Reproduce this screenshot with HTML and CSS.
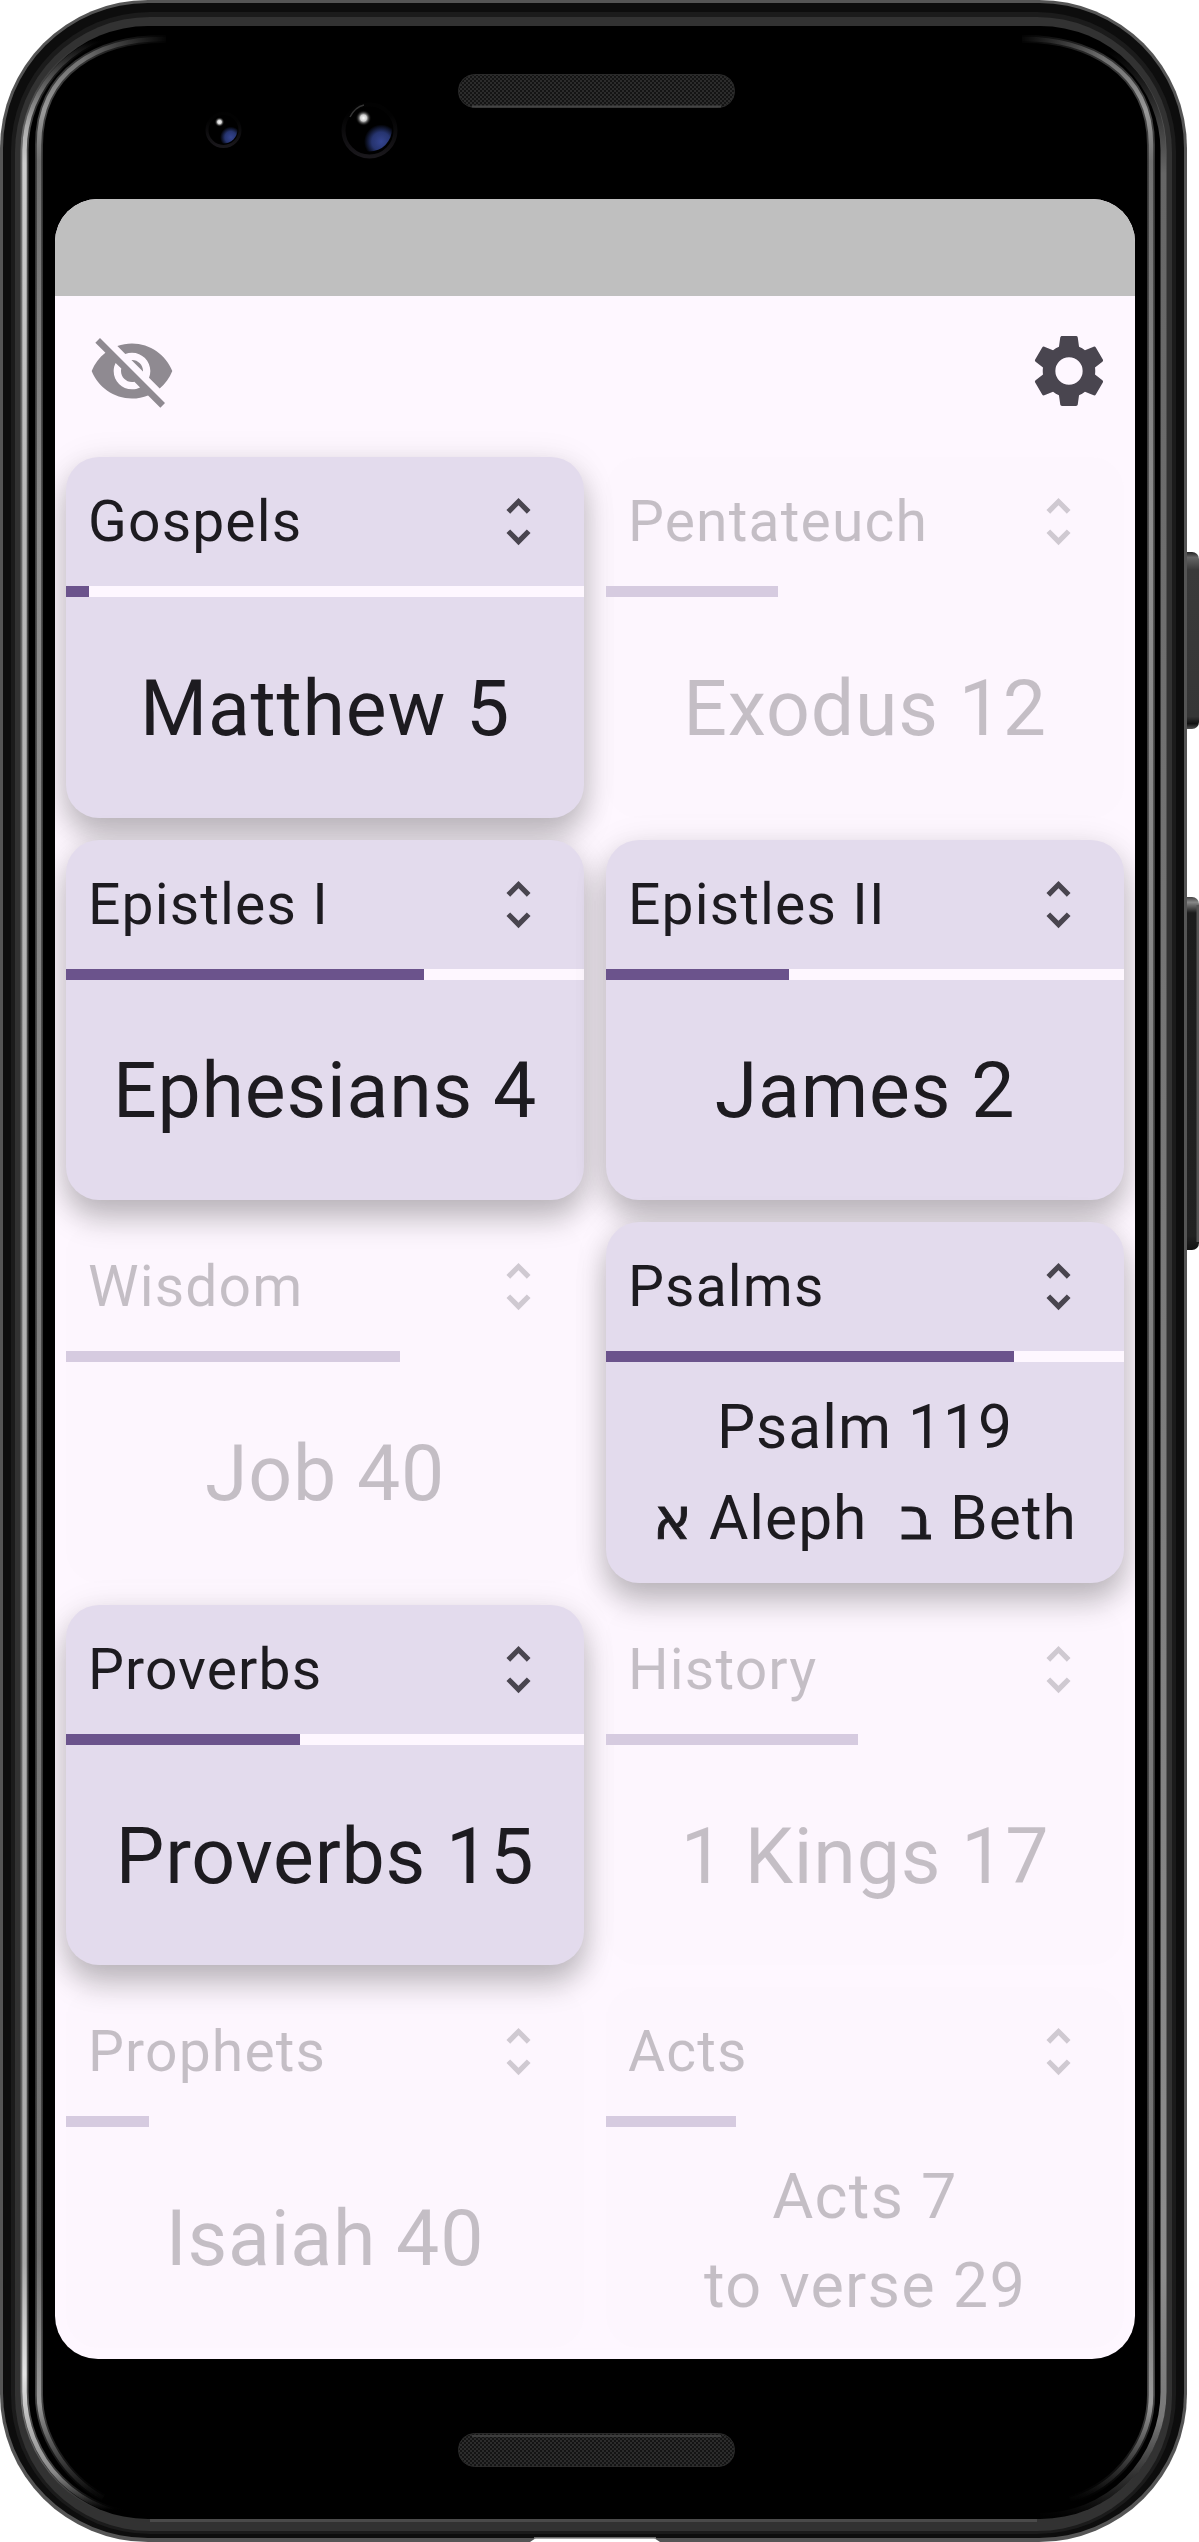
FILE: index.html
```html
<!DOCTYPE html>
<html lang="en">
<head>
<meta charset="utf-8">
<title>Reading Lists</title>
<link rel="stylesheet" href="styles.css">
</head>
<body>
<svg width="0" height="0" class="defs" aria-hidden="true">
  <symbol id="unfold" viewBox="0 0 24 24"><path d="M12 5.830L15.170 9l1.410-1.410L12 3 7.410 7.590 8.830 9 12 5.830zm0 12.340L8.830 15l-1.410 1.410L12 21l4.590-4.590L15.170 15 12 18.170z"/></symbol>
</svg>
<div class="device">
  <svg class="frame" viewBox="0 0 1199 2542" aria-hidden="true">
    <defs>
      <pattern id="mesh" width="4" height="4" patternUnits="userSpaceOnUse"><rect width="4" height="4" fill="#141414"/><rect width="2" height="2" fill="#2c2c2c"/><rect x="2" y="2" width="2" height="2" fill="#2c2c2c"/></pattern>
      <linearGradient id="edge" gradientUnits="userSpaceOnUse" x1="0" y1="40" x2="0" y2="2510">
        <stop offset="0" stop-color="#888" stop-opacity="0"/><stop offset=".035" stop-color="#aaa"/><stop offset=".05" stop-color="#ccc"/><stop offset=".2" stop-color="#b5b5b5"/><stop offset=".9" stop-color="#aaa"/><stop offset=".945" stop-color="#e4e4e4"/><stop offset=".985" stop-color="#888" /><stop offset="1" stop-color="#666" stop-opacity="0"/>
      </linearGradient>
      <linearGradient id="edgeR" gradientUnits="userSpaceOnUse" x1="0" y1="50" x2="0" y2="2520">
        <stop offset="0" stop-color="#666" stop-opacity="0"/><stop offset=".05" stop-color="#666"/><stop offset=".9" stop-color="#8c8c8c"/><stop offset=".96" stop-color="#777"/><stop offset="1" stop-color="#666" stop-opacity="0"/>
      </linearGradient>
      <linearGradient id="inner" gradientUnits="userSpaceOnUse" x1="0" y1="38" x2="0" y2="2502">
        <stop offset="0" stop-color="#666"/><stop offset=".012" stop-color="#777"/><stop offset=".03" stop-color="#999"/><stop offset=".05" stop-color="#707070"/><stop offset=".2" stop-color="#8c8c8c"/><stop offset=".9" stop-color="#707070"/><stop offset=".96" stop-color="#999"/><stop offset="1" stop-color="#555" stop-opacity="0"/>
      </linearGradient>
      <linearGradient id="fade" gradientUnits="userSpaceOnUse" x1="0" y1="0" x2="1187" y2="0">
        <stop offset=".07" stop-color="#fff"/><stop offset=".143" stop-color="#000"/><stop offset=".857" stop-color="#000"/><stop offset=".93" stop-color="#fff"/>
      </linearGradient>
      <mask id="ends" maskUnits="userSpaceOnUse" x="0" y="0" width="1199" height="2542"><rect width="1199" height="2542" fill="url(#fade)"/></mask>
      <radialGradient id="lens" cx=".76" cy=".78" r=".38"><stop offset="0" stop-color="#34448f"/><stop offset=".55" stop-color="#26346f"/><stop offset="1" stop-color="#000"/></radialGradient>
      <radialGradient id="glint"><stop offset="0" stop-color="#fff"/><stop offset=".4" stop-color="#ccc"/><stop offset="1" stop-color="#000" stop-opacity="0"/></radialGradient>
      <linearGradient id="ring" x1="0" y1="0" x2="0" y2="1"><stop offset=".2" stop-color="#020202"/><stop offset="1" stop-color="#1a181c"/></linearGradient>
      <linearGradient id="key" x1="0" y1="0" x2="0" y2="1"><stop offset="0" stop-color="#222"/><stop offset=".03" stop-color="#666"/><stop offset=".1" stop-color="#3a3a3a"/><stop offset=".93" stop-color="#363636"/><stop offset=".97" stop-color="#111"/><stop offset="1" stop-color="#555"/></linearGradient>
      <linearGradient id="keyDark" x1="0" y1="0" x2="0" y2="1"><stop offset="0" stop-color="#444"/><stop offset=".015" stop-color="#888"/><stop offset=".045" stop-color="#1c1c1c"/><stop offset=".96" stop-color="#222"/><stop offset="1" stop-color="#111"/></linearGradient>
    </defs>
    <rect x="1180" y="552" width="19" height="177" rx="7" fill="url(#key)"/>
    <rect x="1180" y="897" width="19" height="353" rx="7" fill="url(#keyDark)"/>
    <rect x="1196.500" y="905" width="2.500" height="337" fill="#555"/>
    <rect width="1187" height="2542" rx="148" fill="#555"/>
    <rect x="3" y="3" width="1181" height="2535" rx="145" fill="#0d0d0d"/>
    <rect x="11" y="12" width="1165" height="2522" rx="139" fill="#1b1b1b"/>
    <rect x="15" y="17" width="1157" height="2514" rx="135" fill="#323232"/>
    <rect x="22" y="26" width="1144" height="2493" rx="126" fill="#000"/>
    <path d="M150 2520.500H1037" stroke="#4a4a4a" stroke-width="3"/>
    <g fill="none" mask="url(#ends)">
      <path d="M148 29.500A123 121 0 0 0 24.500 150V2392A123 124 0 0 0 148 2516" stroke="url(#edge)" stroke-width="8" opacity=".4"/>
      <path d="M148 29.500A123 121 0 0 0 24.500 150V2392A123 124 0 0 0 148 2516" stroke="url(#edge)" stroke-width="4.500"/>
      <path d="M1040 29.500A123 121 0 0 1 1163.500 150V2392A123 124 0 0 1 1040 2516" stroke="url(#edgeR)" stroke-width="6"/>
      <path d="M166 39C100 38 39 70 39 145V2395C39 2435 65 2477 103 2498" stroke="url(#inner)" stroke-width="8" opacity=".45"/>
      <path d="M166 39C100 38 39 70 39 145V2395C39 2435 65 2477 103 2498" stroke="url(#inner)" stroke-width="4.500"/>
      <path d="M1022 39C1087 38 1151 70 1151 145V2395C1151 2440 1120 2485 1070 2500" stroke="url(#inner)" stroke-width="8" opacity=".45"/>
      <path d="M1022 39C1087 38 1151 70 1151 145V2395C1151 2440 1120 2485 1070 2500" stroke="url(#inner)" stroke-width="4.500"/>
    </g>
    <rect x="458.500" y="74.500" width="276" height="33" rx="16" fill="url(#mesh)" stroke="#2a2a2a"/>
    <path d="M472 106.500H721" stroke="#444" stroke-width="2"/>
    <rect x="458.500" y="2433.500" width="276" height="33" rx="16" fill="url(#mesh)" stroke="#2a2a2a"/>
    <path d="M472 2436H721" stroke="#3c3c3c" stroke-width="2"/>
    <circle cx="223.500" cy="130" r="16.500" fill="#000" stroke="url(#ring)" stroke-width="3"/>
    <circle cx="223.500" cy="129.500" r="14" fill="url(#lens)"/>
    <circle cx="219.500" cy="122" r="5" fill="url(#glint)"/>
    <circle cx="369.500" cy="130.500" r="26" fill="#000" stroke="url(#ring)" stroke-width="4"/>
    <circle cx="369.500" cy="129" r="22.500" fill="url(#lens)"/>
    <circle cx="363.500" cy="118" r="8" fill="url(#glint)"/>
    <path d="M350 117Q355 107 364 105" fill="none" stroke="#333" stroke-width="1.500"/>
    <path d="M530 2542L536 2538H654L660 2542Z" fill="#fff"/>
    <path d="M534 2538H656" stroke="#888" stroke-width="1.500"/>
  </svg>

  <main class="screen">
    <div class="status-bar"></div>
    <header class="toolbar">
      <svg class="icon hide" viewBox="0 0 24 24"><path d="M12 7c2.760 0 5 2.240 5 5 0 .65-.13 1.260-.36 1.830l2.920 2.920c1.510-1.260 2.700-2.890 3.430-4.750-1.730-4.390-6-7.500-11-7.500-1.400 0-2.740.25-3.980.7l2.160 2.160C10.740 7.130 11.350 7 12 7zM2 4.270l2.280 2.280.46.46C3.080 8.300 1.780 10.020 1 12c1.730 4.390 6 7.500 11 7.500 1.550 0 3.030-.3 4.380-.84l.42.42L19.730 22 21 20.730 3.270 3 2 4.270zM7.530 9.800l1.550 1.550c-.05.21-.08.43-.08.65 0 1.660 1.340 3 3 3 .22 0 .44-.03.65-.08l1.550 1.550c-.67.33-1.410.53-2.200.53-2.760 0-5-2.240-5-5 0-.79.2-1.530.53-2.200zm4.310-.78l3.150 3.150.02-.16c0-1.660-1.340-3-3-3l-.17.01z"/></svg>
      <svg class="icon settings" viewBox="0 0 24 24"><path d="M19.500 12c0-.34-.03-.66-.07-1l2.110-1.630c.19-.15.24-.42.12-.64l-2-3.460c-.12-.22-.39-.31-.61-.22l-2.490 1c-.52-.39-1.060-.73-1.690-.98l-.37-2.650A.506.506 0 0 0 14 2h-4c-.25 0-.46.18-.5.42l-.37 2.650c-.63.25-1.170.59-1.690.98l-2.490-1c-.22-.09-.49 0-.61.22l-2 3.460c-.13.22-.07.49.12.64L4.570 11c-.04.34-.07.66-.07 1s.03.65.07.970l-2.110 1.660c-.19.15-.25.42-.12.64l2 3.460c.12.22.39.3.61.22l2.490-1.010c.52.4 1.060.74 1.690.99l.37 2.650c.04.24.25.42.5.42h4c.25 0 .46-.18.5-.42l.37-2.650c.63-.26 1.170-.59 1.690-.99l2.490 1.010c.22.08.49 0 .61-.22l2-3.460c.12-.22.07-.49-.12-.64l-2.110-1.660c.04-.32.07-.63.07-.97zM12 15.900a3.900 3.900 0 1 1 0-7.800 3.900 3.900 0 0 1 0 7.800z"/></svg>
    </header>
    <section class="lists">
      <article class="card"><div class="card-head"><h2>Gospels</h2><svg class="unfold"><use href="#unfold"/></svg></div><div class="track"><div class="fill" style="width:4.500%"></div></div><p class="reading">Matthew 5</p></article>
      <article class="card done"><div class="card-head"><h2>Pentateuch</h2><svg class="unfold"><use href="#unfold"/></svg></div><div class="track"><div class="fill" style="width:33.200%"></div></div><p class="reading">Exodus 12</p></article>
      <article class="card"><div class="card-head"><h2>Epistles I</h2><svg class="unfold"><use href="#unfold"/></svg></div><div class="track"><div class="fill" style="width:69.200%"></div></div><p class="reading">Ephesians 4</p></article>
      <article class="card"><div class="card-head"><h2>Epistles II</h2><svg class="unfold"><use href="#unfold"/></svg></div><div class="track"><div class="fill" style="width:35.400%"></div></div><p class="reading">James 2</p></article>
      <article class="card done"><div class="card-head"><h2>Wisdom</h2><svg class="unfold"><use href="#unfold"/></svg></div><div class="track"><div class="fill" style="width:64.500%"></div></div><p class="reading">Job 40</p></article>
      <article class="card"><div class="card-head"><h2>Psalms</h2><svg class="unfold"><use href="#unfold"/></svg></div><div class="track"><div class="fill" style="width:78.700%"></div></div><p class="reading psalm">Psalm 119<br><bdi>א</bdi> Aleph&nbsp; <bdi>ב</bdi> Beth</p></article>
      <article class="card"><div class="card-head"><h2>Proverbs</h2><svg class="unfold"><use href="#unfold"/></svg></div><div class="track"><div class="fill" style="width:45.200%"></div></div><p class="reading">Proverbs 15</p></article>
      <article class="card done"><div class="card-head"><h2>History</h2><svg class="unfold"><use href="#unfold"/></svg></div><div class="track"><div class="fill" style="width:48.600%"></div></div><p class="reading">1 Kings 17</p></article>
      <article class="card done"><div class="card-head"><h2>Prophets</h2><svg class="unfold"><use href="#unfold"/></svg></div><div class="track"><div class="fill" style="width:16%"></div></div><p class="reading">Isaiah 40</p></article>
      <article class="card done"><div class="card-head"><h2>Acts</h2><svg class="unfold"><use href="#unfold"/></svg></div><div class="track"><div class="fill" style="width:25%"></div></div><p class="reading verses">Acts 7<br>to verse 29</p></article>
    </section>
  </main>
</div>
</body>
</html>
```
FILE: styles.css
```css
* { box-sizing: border-box; }

body {
  margin: 0;
  background: #fff;
  font-family: Roboto, "Noto Sans", "Open Sans", "DejaVu Sans", sans-serif;
  color: #1d1b20;
}

.defs { position: absolute; }

.device {
  position: relative;
  width: 1199px;
  height: 2542px;
  padding: 199px 64px 183px 55px;
  overflow: hidden;
}

.frame {
  position: absolute;
  inset: 0;
  width: 1199px;
  height: 2542px;
}

.screen {
  position: relative;
  display: flex;
  flex-direction: column;
  width: 1080px;
  height: 2160px;
  border-radius: 43px;
  overflow: hidden;
  background: #fef7ff;
}

.status-bar { height: 96.500px; background: #bfbfbf; }

.toolbar {
  display: flex;
  justify-content: space-between;
  align-items: center;
  height: 150.500px;
  padding: 0 24px 0 33px;
}

.icon { width: 88px; height: 88px; }
.hide { fill: #8f8a91; }
.settings { fill: #49454f; width: 84px; height: 84px; }

.lists {
  flex: 1;
  display: grid;
  grid-template-columns: 1fr 1fr;
  grid-template-rows: repeat(5, 1fr);
  gap: 22px;
  padding: 11px;
}

.card {
  display: flex;
  flex-direction: column;
  min-height: 0;
  border-radius: 33px;
  background: #e3dbed;
  box-shadow: 0 19px 30px rgba(0, 0, 0, .22), 0 4px 34px rgba(0, 0, 0, .1);
}

.card-head {
  display: flex;
  justify-content: space-between;
  align-items: center;
  height: 129px;
  padding: 0 34.500px 0 22px;
}

h2 {
  margin: 0;
  font-size: 57px;
  font-weight: 400;
  line-height: 71px;
  letter-spacing: 1.150px;
}

.unfold { width: 63px; height: 63px; fill: #49454f; }

.track { height: 11px; background: #fef7ff; }
.fill { height: 100%; background: #6b538c; }

.reading {
  flex: 1;
  display: grid;
  place-content: center;
  margin: 0;
  padding-top: 3px;
  text-align: center;
  font-size: 77px;
  line-height: 92px;
  letter-spacing: .8px;
}

.psalm {
  display: block;
  padding-top: 2px;
  font-size: 60.500px;
  line-height: 91px;
  letter-spacing: 1px;
}

.psalm bdi {
  font-family: "DejaVu Sans", sans-serif;
  font-size: 58px;
  line-height: 1;
  -webkit-text-stroke: .9px currentColor;
}

.verses {
  display: block;
  padding-top: 6px;
  font-size: 63px;
  line-height: 89px;
  letter-spacing: 1.200px;
}

.done { background: rgba(226, 218, 236, .04); box-shadow: none; }
.done .card-head, .done .reading { opacity: .25; }
.done .track { background: none; }
.done .fill { background: #d6cbe0; }
```
